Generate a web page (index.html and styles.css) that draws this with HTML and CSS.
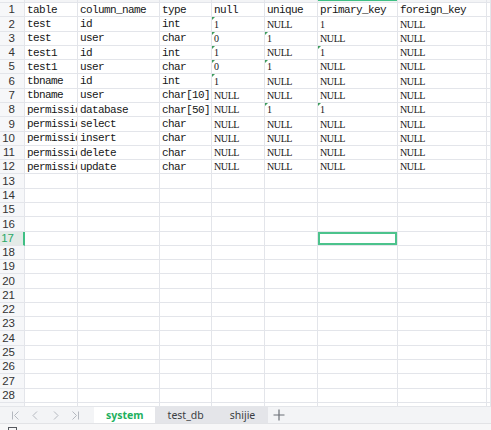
FILE: index.html
```html
<!DOCTYPE html>
<html>
<head>
<meta charset="utf-8">
<link rel="stylesheet" href="styles.css">
</head>
<body>
<div class="app">
  <div class="sheet">
    <div class="row colhead"><div class="rh"></div><div></div><div></div><div></div><div></div><div></div><div class="selcol"></div><div></div><div></div></div>
    <div class="row"><div class="rh">1</div><div>table</div><div>column_name</div><div>type</div><div>null</div><div>unique</div><div>primary_key</div><div>foreign_key</div><div></div></div>
    <div class="row"><div class="rh">2</div><div>test</div><div>id</div><div>int</div><div class="n m">1</div><div class="n">NULL</div><div class="n">1</div><div class="n">NULL</div><div></div></div>
    <div class="row"><div class="rh">3</div><div>test</div><div>user</div><div>char</div><div class="n m">0</div><div class="n m">1</div><div class="n">NULL</div><div class="n">NULL</div><div></div></div>
    <div class="row"><div class="rh">4</div><div>test1</div><div>id</div><div>int</div><div class="n m">1</div><div class="n">NULL</div><div class="n m">1</div><div class="n">NULL</div><div></div></div>
    <div class="row"><div class="rh">5</div><div>test1</div><div>user</div><div>char</div><div class="n m">0</div><div class="n m">1</div><div class="n">NULL</div><div class="n">NULL</div><div></div></div>
    <div class="row"><div class="rh">6</div><div>tbname</div><div>id</div><div>int</div><div class="n m">1</div><div class="n">NULL</div><div class="n">NULL</div><div class="n">NULL</div><div></div></div>
    <div class="row"><div class="rh">7</div><div>tbname</div><div>user</div><div>char[10]</div><div class="n">NULL</div><div class="n">NULL</div><div class="n">NULL</div><div class="n">NULL</div><div></div></div>
    <div class="row"><div class="rh">8</div><div>permissio</div><div>database</div><div>char[50]</div><div class="n">NULL</div><div class="n m">1</div><div class="n m">1</div><div class="n">NULL</div><div></div></div>
    <div class="row"><div class="rh">9</div><div>permissio</div><div>select</div><div>char</div><div class="n">NULL</div><div class="n">NULL</div><div class="n">NULL</div><div class="n">NULL</div><div></div></div>
    <div class="row"><div class="rh">10</div><div>permissio</div><div>insert</div><div>char</div><div class="n">NULL</div><div class="n">NULL</div><div class="n">NULL</div><div class="n">NULL</div><div></div></div>
    <div class="row"><div class="rh">11</div><div>permissio</div><div>delete</div><div>char</div><div class="n">NULL</div><div class="n">NULL</div><div class="n">NULL</div><div class="n">NULL</div><div></div></div>
    <div class="row"><div class="rh">12</div><div>permissio</div><div>update</div><div>char</div><div class="n">NULL</div><div class="n">NULL</div><div class="n">NULL</div><div class="n">NULL</div><div></div></div>
    <div class="row"><div class="rh">13</div><div></div><div></div><div></div><div></div><div></div><div></div><div></div><div></div></div>
    <div class="row"><div class="rh">14</div><div></div><div></div><div></div><div></div><div></div><div></div><div></div><div></div></div>
    <div class="row"><div class="rh">15</div><div></div><div></div><div></div><div></div><div></div><div></div><div></div><div></div></div>
    <div class="row"><div class="rh">16</div><div></div><div></div><div></div><div></div><div></div><div></div><div></div><div></div></div>
    <div class="row"><div class="rh selrow">17</div><div></div><div></div><div></div><div></div><div></div><div class="selcell"></div><div></div><div></div></div>
    <div class="row"><div class="rh">18</div><div></div><div></div><div></div><div></div><div></div><div></div><div></div><div></div></div>
    <div class="row"><div class="rh">19</div><div></div><div></div><div></div><div></div><div></div><div></div><div></div><div></div></div>
    <div class="row"><div class="rh">20</div><div></div><div></div><div></div><div></div><div></div><div></div><div></div><div></div></div>
    <div class="row"><div class="rh">21</div><div></div><div></div><div></div><div></div><div></div><div></div><div></div><div></div></div>
    <div class="row"><div class="rh">22</div><div></div><div></div><div></div><div></div><div></div><div></div><div></div><div></div></div>
    <div class="row"><div class="rh">23</div><div></div><div></div><div></div><div></div><div></div><div></div><div></div><div></div></div>
    <div class="row"><div class="rh">24</div><div></div><div></div><div></div><div></div><div></div><div></div><div></div><div></div></div>
    <div class="row"><div class="rh">25</div><div></div><div></div><div></div><div></div><div></div><div></div><div></div><div></div></div>
    <div class="row"><div class="rh">26</div><div></div><div></div><div></div><div></div><div></div><div></div><div></div><div></div></div>
    <div class="row"><div class="rh">27</div><div></div><div></div><div></div><div></div><div></div><div></div><div></div><div></div></div>
    <div class="row"><div class="rh">28</div><div></div><div></div><div></div><div></div><div></div><div></div><div></div><div></div></div>
    <div class="row"><div class="rh"></div><div></div><div></div><div></div><div></div><div></div><div></div><div></div><div></div></div>
  </div>
  <div class="tabbar">
    <div class="nav">
      <svg width="9" height="9" viewBox="0 0 9 9"><path d="M1.5 0.5V8.5M7.5 0.5L3.5 4.5L7.5 8.5" fill="none" stroke="#b4b8bf" stroke-width="1"/></svg>
      <svg width="9" height="9" viewBox="0 0 9 9"><path d="M6 0.5L2 4.5L6 8.5" fill="none" stroke="#b4b8bf" stroke-width="1"/></svg>
      <svg width="9" height="9" viewBox="0 0 9 9"><path d="M3 0.5L7 4.5L3 8.5" fill="none" stroke="#b4b8bf" stroke-width="1"/></svg>
      <svg width="9" height="9" viewBox="0 0 9 9"><path d="M1.5 0.5L5.5 4.5L1.5 8.5M7.5 0.5V8.5" fill="none" stroke="#b4b8bf" stroke-width="1"/></svg>
    </div>
    <div class="tab active">system</div>
    <div class="tab">test_db</div>
    <div class="tab">shijie</div>
    <div class="add"><svg width="12" height="12" viewBox="0 0 12 12"><path d="M6 0.5V11.5M0.5 6H11.5" fill="none" stroke="#6b6f76" stroke-width="1.2"/></svg></div>
  </div>
  <div class="status"><span class="sicon"></span></div>
</div>
</body>
</html>
```
FILE: styles.css
```css
html, body {
  margin: 0;
  padding: 0;
  background: #ffffff;
  overflow: hidden;
}
.app {
  width: 491px;
  height: 430px;
  display: flex;
  flex-direction: column;
}
.sheet {
  height: 406px;
  overflow: hidden;
  flex: none;
}
.row {
  display: grid;
  grid-template-columns: 25px 53px 82px 52px 53px 53px 80px 89px 1fr;
  height: 14.286px;
}
.row > div {
  box-sizing: border-box;
  display: flex;
  align-items: flex-end;
  border-right: 1px solid #e3e5ea;
  border-bottom: 1px solid #e3e5ea;
  font-family: "Liberation Mono", monospace;
  font-size: 11px;
  letter-spacing: -0.6px;
  color: #161616;
  line-height: 12.5px;
  padding: 0 0 0 2px;
  white-space: nowrap;
  overflow: hidden;
  position: relative;
}
.row > div.n {
  font-family: "Liberation Serif", serif;
  font-size: 10px;
  letter-spacing: -0.4px;
  line-height: 12px;
}
.row > div.m::before {
  content: "";
  position: absolute;
  left: 0;
  top: 0;
  border-top: 3px solid #3f9d5e;
  border-right: 3px solid transparent;
}
.row > div.rh {
  background: #f6f7f9;
  font-family: "Liberation Sans", Arial, sans-serif;
  font-size: 11.5px;
  letter-spacing: 0;
  color: #333333;
  justify-content: flex-end;
  padding: 0 9px 0 0;
  line-height: 13px;
}
.row > div.rh.selrow {
  background: #e3ebe7;
  color: #2aa867;
  border-right: 2px solid #3fbf84;
}
.row > div.selcell {
  box-shadow: inset 0 0 0 2px #4cc38c;
}
.colhead {
  height: 3px;
}
.colhead > div {
  background: #f3f4f6;
  line-height: 3px;
  padding: 0;
}
.colhead > div.selcol {
  background: linear-gradient(#3fbf84 0, #3fbf84 1.5px, #eef5f1 1.5px);
}
.tabbar {
  height: 17px;
  flex: none;
  background: #f3f4f6;
  border-top: 1px solid #e4e6ea;
  box-sizing: border-box;
  display: flex;
  align-items: stretch;
}
.nav {
  width: 94px;
  display: flex;
  align-items: center;
  gap: 11px;
  padding-left: 11px;
  box-sizing: border-box;
}
.tab {
  font-family: "Noto Sans", sans-serif;
  font-size: 10.5px;
  line-height: 14px;
  color: #3a3d42;
  background: #e4e5e9;
  padding: 0 13px;
  display: flex;
  align-items: center;
}
.tab.active {
  background: #ffffff;
  color: #22b05e;
  font-weight: bold;
  padding: 0 11px 0 12px;
}
.add {
  display: flex;
  align-items: center;
  padding-left: 5px;
}
.status {
  flex: 1;
  background: #f7f7f8;
  border-top: 1px solid #e2e3e6;
  position: relative;
}
.sicon {
  position: absolute;
  left: 8px;
  top: 3px;
  width: 7px;
  height: 4px;
  border: 1px solid #55585e;
  border-bottom: none;
}
```
